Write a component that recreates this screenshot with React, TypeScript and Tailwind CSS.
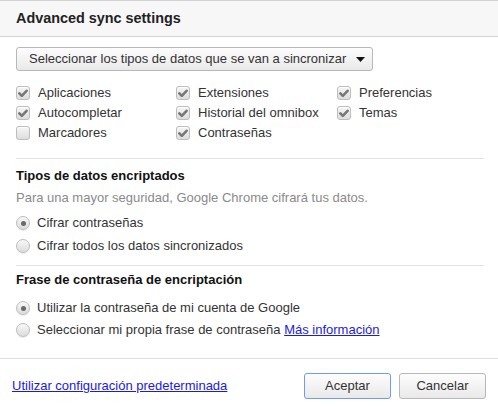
import React from "react";

const font = { fontFamily: '"Liberation Sans", Arial, sans-serif' };

function CheckBox({ checked }: { checked: boolean }) {
  return (
    <span className="flex h-[14px] w-[14px] shrink-0 items-center justify-center rounded-[3px] border border-[#bdbdbd] bg-gradient-to-b from-[#f6f6f6] to-[#dedede] shadow-[inset_0_1px_0_#ffffff]">
      {checked && (
        <svg width="10" height="9" viewBox="0 0 10 9">
          <path d="M1.4 4.4 L3.8 6.8 L8.6 1.8" fill="none" stroke="#777" strokeWidth="2.6" strokeLinecap="round" strokeLinejoin="round" />
        </svg>
      )}
    </span>
  );
}

function Radio({ checked }: { checked: boolean }) {
  return (
    <span className="flex h-[14px] w-[14px] shrink-0 items-center justify-center rounded-full border border-[#bdbdbd] bg-gradient-to-b from-[#f8f8f8] to-[#dcdcdc] shadow-[0_1px_1px_rgba(0,0,0,0.08)]">
      {checked && <span className="h-[5px] w-[5px] rounded-full bg-[#6a6a6a]" />}
    </span>
  );
}

const types: [string, boolean][] = [
  ["Aplicaciones", true],
  ["Extensiones", true],
  ["Preferencias", true],
  ["Autocompletar", true],
  ["Historial del omnibox", true],
  ["Temas", true],
  ["Marcadores", false],
  ["Contraseñas", true],
];

export default function App() {
  return (
    <div className="h-[407px] w-[498px] overflow-hidden bg-white text-[13px] text-[#222]" style={font}>
      {/* title bar */}
      <div className="flex h-[37px] items-center border-y border-[#d2d2d2] bg-[#f7f7f7] pl-4">
        <span className="text-[14.4px] font-bold text-[#222]">Advanced sync settings</span>
      </div>

      <div className="px-4">
        {/* data type selector */}
        <div className="mt-[10px] flex h-[24px] w-[357px] items-center justify-between rounded-[3px] border border-[#b8b8b8] bg-gradient-to-b from-[#fdfdfd] to-[#e9e9e9] pl-[12px] pr-[7px] text-[#333]">
          <span>Seleccionar los tipos de datos que se van a sincronizar</span>
          <svg width="9" height="5" viewBox="0 0 9 5">
            <path d="M0 0 H9 L4.5 5 Z" fill="#111" />
          </svg>
        </div>

        {/* sync data types */}
        <div className="mt-[12px] grid grid-cols-[160px_161px_1fr]">
          {types.map(([label, checked]) => (
            <div key={label} className="flex h-[20px] items-center gap-[8px] text-[#333]">
              <CheckBox checked={checked} />
              <span>{label}</span>
            </div>
          ))}
        </div>

        <div className="mt-[15px] h-px w-[468px] bg-[#e3e3e3]" />

        {/* encrypted types */}
        <div className="mt-[7px] flex h-[20px] items-center font-bold text-[#111]">Tipos de datos encriptados</div>
        <div className="mt-[2px] flex h-[20px] items-center text-[#8a8a8a]">
          Para una mayor seguridad, Google Chrome cifrará tus datos.
        </div>
        <div className="mt-[5px] flex h-[20px] items-center gap-[7px] text-[#333]">
          <Radio checked />
          <span>Cifrar contraseñas</span>
        </div>
        <div className="mt-[3px] flex h-[20px] items-center gap-[7px] text-[#333]">
          <Radio checked={false} />
          <span>Cifrar todos los datos sincronizados</span>
        </div>

        <div className="mt-[9px] h-px w-[468px] bg-[#e3e3e3]" />

        {/* passphrase */}
        <div className="mt-[4px] flex h-[20px] items-center font-bold text-[#111]">Frase de contraseña de encriptación</div>
        <div className="mt-[7px] flex h-[22px] items-center gap-[7px] text-[#333]">
          <Radio checked />
          <span>Utilizar la contraseña de mi cuenta de Google</span>
        </div>
        <div className="flex h-[22px] items-center gap-[7px] text-[#333]">
          <Radio checked={false} />
          <span>
            Seleccionar mi propia frase de contraseña{" "}
            <a href="#" className="text-[#1a1ae6] underline">Más información</a>
          </span>
        </div>
      </div>

      <div className="mt-[17px] h-px w-full bg-[#e0e0e0]" />

      {/* footer */}
      <div className="flex items-center pl-[12px] pr-[12px] pt-[14px]">
        <a href="#" className="text-[#1a1ae6] underline">Utilizar configuración predeterminada</a>
        <div className="ml-auto flex gap-[8px]">
          <button className="h-[26px] w-[87px] rounded-[3px] border border-[#6f9be8] bg-gradient-to-b from-[#fdfdfd] to-[#e9e9e9] text-[13px] text-[#333]">
            Aceptar
          </button>
          <button className="h-[26px] w-[87px] rounded-[3px] border border-[#b8b8b8] bg-gradient-to-b from-[#fdfdfd] to-[#e9e9e9] text-[13px] text-[#333]">
            Cancelar
          </button>
        </div>
      </div>
    </div>
  );
}
